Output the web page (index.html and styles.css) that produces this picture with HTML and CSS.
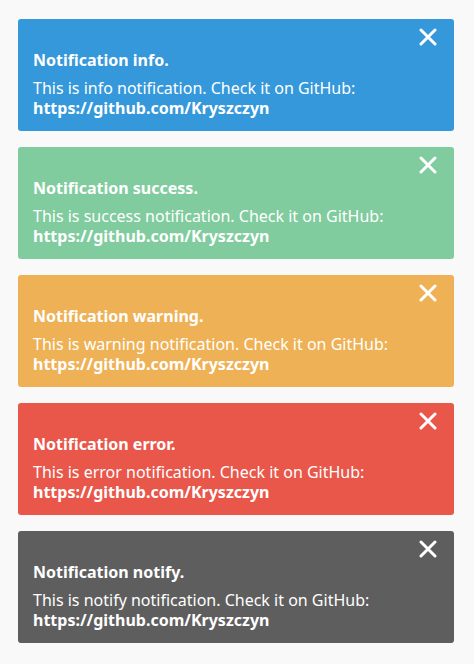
FILE: index.html
```html
<!DOCTYPE html>
<html>
<head>
<meta charset="utf-8">
<link rel="stylesheet" href="styles.css">
</head>
<body>
<div class="list">
  <div class="note info">
    <button class="close" aria-label="close"><svg viewBox="0 0 18 18" width="18" height="18"><path d="M2 2 L16 16 M16 2 L2 16" stroke="#fff" stroke-width="3" stroke-linecap="round"/></svg></button>
    <div class="title">Notification info.</div>
    <div class="text">This is info notification. Check it on GitHub:<br><b>https://github.com/Kryszczyn</b></div>
  </div>
  <div class="note success">
    <button class="close" aria-label="close"><svg viewBox="0 0 18 18" width="18" height="18"><path d="M2 2 L16 16 M16 2 L2 16" stroke="#fff" stroke-width="3" stroke-linecap="round"/></svg></button>
    <div class="title">Notification success.</div>
    <div class="text">This is success notification. Check it on GitHub:<br><b>https://github.com/Kryszczyn</b></div>
  </div>
  <div class="note warning">
    <button class="close" aria-label="close"><svg viewBox="0 0 18 18" width="18" height="18"><path d="M2 2 L16 16 M16 2 L2 16" stroke="#fff" stroke-width="3" stroke-linecap="round"/></svg></button>
    <div class="title">Notification warning.</div>
    <div class="text">This is warning notification. Check it on GitHub:<br><b>https://github.com/Kryszczyn</b></div>
  </div>
  <div class="note error">
    <button class="close" aria-label="close"><svg viewBox="0 0 18 18" width="18" height="18"><path d="M2 2 L16 16 M16 2 L2 16" stroke="#fff" stroke-width="3" stroke-linecap="round"/></svg></button>
    <div class="title">Notification error.</div>
    <div class="text">This is error notification. Check it on GitHub:<br><b>https://github.com/Kryszczyn</b></div>
  </div>
  <div class="note notify">
    <button class="close" aria-label="close"><svg viewBox="0 0 18 18" width="18" height="18"><path d="M2 2 L16 16 M16 2 L2 16" stroke="#fff" stroke-width="3" stroke-linecap="round"/></svg></button>
    <div class="title">Notification notify.</div>
    <div class="text">This is notify notification. Check it on GitHub:<br><b>https://github.com/Kryszczyn</b></div>
  </div>
</div>
</body>
</html>
```
FILE: styles.css
```css
html, body {
  margin: 0;
  padding: 0;
  background: #f9f9f9;
}
body {
  font-family: "Noto Sans", "Open Sans", sans-serif;
  color: #fff;
}
.list {
  display: flex;
  flex-direction: column;
  gap: 16px;
  padding: 19px 20px 0 18px;
}
.note {
  position: relative;
  height: 112px;
  box-sizing: border-box;
  border-radius: 3px;
  padding: 31px 15px 0 15px;
}
.info { background: #3498db; }
.success { background: #80cc9e; }
.warning { background: #eeb155; }
.error { background: #e9564a; }
.notify { background: #5e5e5e; }
.close {
  position: absolute;
  top: 9px;
  right: 17px;
  width: 18px;
  height: 18px;
  padding: 0;
  margin: 0;
  border: 0;
  background: none;
  display: block;
}
.close svg { display: block; }
.title {
  font-weight: bold;
  font-size: 16px;
  line-height: 20px;
  margin-bottom: 8px;
}
.text {
  font-size: 16px;
  line-height: 20px;
}
.text b { font-weight: bold; }
```
